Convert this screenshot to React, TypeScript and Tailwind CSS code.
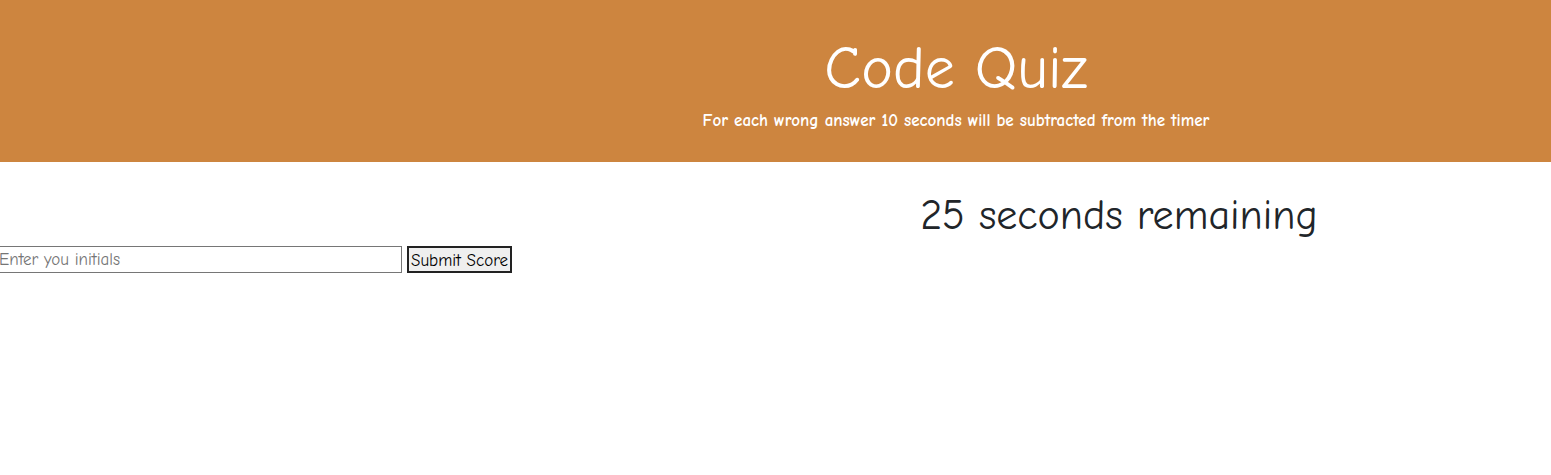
import React from 'react';

const font = "font-['Comic_Sans_MS','Comic_Neue',cursive]";

const App: React.FC = () => {
  return (
    <div className={`min-h-[475px] w-full bg-white ${font}`}>
      {/* header */}
      <header className="flex h-[162px] flex-col items-center bg-[#cd853f] pl-[361px] pt-[33px] text-white">
        <h1 className="text-[60px] font-normal leading-[1.2]">Code Quiz</h1>
        <p className="mt-[3px] text-[17px] font-bold">For each wrong answer 10 seconds will be subtracted from the timer</p>
      </header>

      {/* timer */}
      <div className="flex justify-center pl-[687px] pt-[29px]">
        <h2 className="text-[42px] font-normal leading-[1.2] text-[#212529]">25 seconds remaining</h2>
      </div>

      {/* score form */}
      <div className="flex items-center gap-[5px] pt-[5px]">
        <input
          type="text"
          placeholder="Enter you initials"
          className="ml-[-4px] h-[27px] w-[406px] border border-[#767676] px-[2px] text-[17px] text-black placeholder:text-[#757575]"
        />
        <button className="h-[27px] border-2 border-[#222] bg-[#efefef] px-[2px] text-[17px] text-black">
          Submit Score
        </button>
      </div>
    </div>
  );
};

export default App;
